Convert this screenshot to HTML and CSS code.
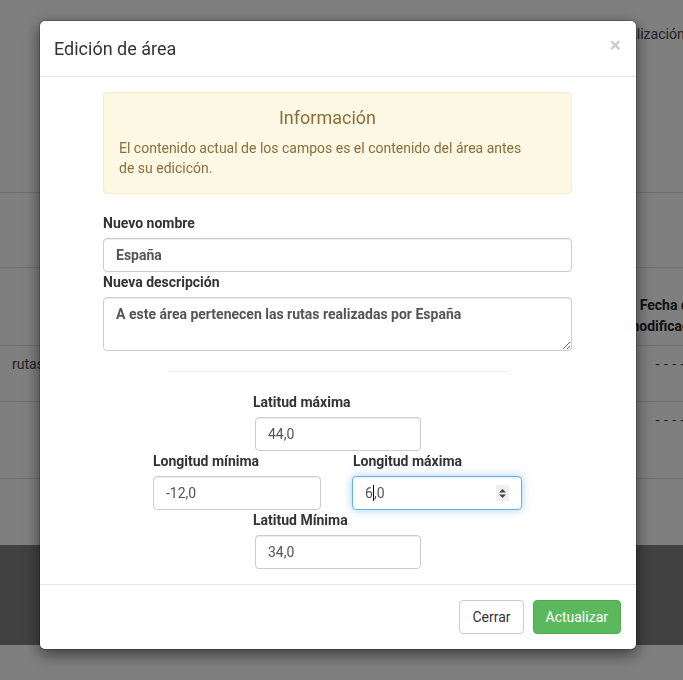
FILE: index.html
```html
<!DOCTYPE html>
<html lang="es">
<head>
<meta charset="utf-8">
<title>Edición de área</title>
<link rel="stylesheet" href="styles.css">
</head>
<body>
<div class="page">
  <div class="row r0"><span class="th-top">Fecha de actualización</span></div>
  <div class="row r1"></div>
  <div class="row r2"><span class="th-mod">Fecha de<br>modificación</span></div>
  <div class="row r3"><span class="cell-left">rutas realizadas por España</span><span class="dash">- - - -</span></div>
  <div class="row r4"><span class="dash">- - - -</span></div>
  <div class="gap"></div>
  <div class="band"></div>
</div>
<div class="backdrop"></div>
<div class="modal">
  <div class="modal-content">
    <div class="modal-header">
      <h4 class="modal-title">Edición de área</h4>
      <button class="close" type="button">×</button>
    </div>
    <div class="modal-body">
      <div class="inner">
        <div class="alert">
          <h4>Información</h4>
          <p>El contenido actual de los campos es el contenido del área antes de su edicicón.</p>
        </div>
        <label>Nuevo nombre</label>
        <input class="form-control strong" type="text" value="España">
        <label>Nueva descripción</label>
        <textarea class="form-control strong area" rows="2">A este área pertenecen las rutas realizadas por España</textarea>
        <hr class="sep">
        <div class="coords">
          <div class="grp g-top">
            <label>Latitud máxima</label>
            <input class="form-control" type="text" value="44,0">
          </div>
          <div class="grp g-left">
            <label>Longitud mínima</label>
            <input class="form-control" type="text" value="-12,0">
          </div>
          <div class="grp g-right">
            <label>Longitud máxima</label>
            <div class="form-control focused">6<span class="caret"></span>,0<span class="spin"><svg width="9" height="11" viewBox="0 0 9 11"><path d="M4.5 1 L8 4.5 H1 Z" fill="#444"/><path d="M1 6.5 H8 L4.5 10 Z" fill="#444"/></svg></span></div>
          </div>
          <div class="grp g-bottom">
            <label>Latitud Mínima</label>
            <input class="form-control" type="text" value="34,0">
          </div>
        </div>
      </div>
    </div>
    <div class="modal-footer">
      <button class="btn btn-default" type="button">Cerrar</button>
      <button class="btn btn-success" type="button">Actualizar</button>
    </div>
  </div>
</div>
</body>
</html>
```
FILE: styles.css
```css
html, body {
  margin: 0;
  padding: 0;
  height: 100%;
  overflow: hidden;
}
body {
  font-family: Roboto, "Liberation Sans", sans-serif;
  font-size: 14px;
  line-height: 20px;
  color: #333;
  background: #fff;
}
.page {
  width: 683px;
}
.row {
  border-bottom: 1px solid #ddd;
  box-sizing: border-box;
  white-space: nowrap;
  overflow: hidden;
  display: flex;
  justify-content: space-between;
  align-items: flex-start;
}
.r0 { height: 193px; padding: 24px 0 0 542px; color: #444; }
.r1 { height: 75px; }
.r2 { height: 78px; align-items: flex-end; padding: 0 0 8px 0; justify-content: flex-end; }
.th-mod {
  display: block;
  font-weight: 700;
  text-align: center;
  width: 96px;
  margin-right: -33px;
  line-height: 21px;
  color: #222;
}
.r3 { height: 56px; padding: 8px 0 0 12px; color: #444; }
.r4 { height: 77px; padding: 8px 0 0 12px; justify-content: flex-end; }
.dash { margin-right: -2px; letter-spacing: 0.5px; color: #444; }
.gap { height: 66px; }
.band { height: 100px; background: #838383; }

.backdrop {
  position: fixed;
  inset: 0;
  background: rgba(0, 0, 0, 0.5);
}
.modal {
  position: fixed;
  top: 20px;
  left: 39px;
  width: 598px;
}
.modal-content {
  background: #fff;
  border: 1px solid rgba(0, 0, 0, 0.2);
  background-clip: padding-box;
  border-radius: 6px;
  box-shadow: 0 5px 15px rgba(0, 0, 0, 0.5);
}
.modal-header {
  padding: 15px 15px 14px 14px;
  border-bottom: 1px solid #e5e5e5;
  display: flex;
  justify-content: space-between;
  align-items: flex-start;
}
.modal-title {
  margin: 0;
  font-size: 18px;
  font-weight: 400;
  line-height: 26px;
  color: #333;
}
.close {
  font-family: Roboto, "Liberation Sans", sans-serif;
  font-size: 21px;
  font-weight: 700;
  line-height: 1;
  color: #000;
  opacity: 0.2;
  background: none;
  border: 0;
  padding: 0;
  margin: -1px 0 0 0;
}
.modal-body {
  padding: 15px;
}
.inner {
  margin: 0 49px 0 48px;
}
.alert {
  padding: 15px 35px 15px 15px;
  border: 1px solid #faebcc;
  border-radius: 4px;
  background: #fcf8e3;
  color: #8a6d3b;
  margin-bottom: 19px;
}
.alert h4 {
  margin: 0 0 10px;
  font-size: 18px;
  font-weight: 400;
  line-height: 20px;
  text-align: center;
}
.alert p {
  margin: 0;
  line-height: 20px;
}
label {
  display: block;
  font-weight: 700;
  line-height: 20px;
  margin-bottom: 5px;
  color: #333;
}
.form-control {
  display: block;
  width: 100%;
  height: 34px;
  padding: 6px 12px;
  box-sizing: border-box;
  font-family: Roboto, "Liberation Sans", sans-serif;
  font-size: 14px;
  line-height: 20px;
  color: #555;
  background: #fff;
  border: 1px solid #ccc;
  border-radius: 4px;
  box-shadow: inset 0 1px 1px rgba(0, 0, 0, 0.075);
  margin: 0;
}
.strong {
  font-weight: 700;
}
.area {
  height: 54px;
  resize: vertical;
}
.sep {
  border: 0;
  border-top: 1px solid #eee;
  margin: 20px 63px 20px 64px;
}
.coords {
  margin: 0 51px 0 50px;
  display: grid;
  grid-template-columns: 100px 68px 32px 68px 100px;
}
.g-top { grid-column: 2 / 5; grid-row: 1; }
.g-left { grid-column: 1 / 3; grid-row: 2; }
.g-right { grid-column: 4 / 6; grid-row: 2; }
.g-bottom { grid-column: 2 / 5; grid-row: 3; }
.g-top .form-control, .g-bottom .form-control { margin-left: 2px; width: 166px; }
.g-right .form-control { margin-left: -1px; width: 170px; }
.focused {
  position: relative;
  border-color: #66afe9;
  box-shadow: inset 0 1px 1px rgba(0, 0, 0, 0.075), 0 0 8px rgba(102, 175, 233, 0.6);
  color: #555;
}
.caret {
  display: inline-block;
  width: 1px;
  height: 16px;
  background: #000;
  vertical-align: -3px;
}
.spin {
  position: absolute;
  right: 12px;
  top: 8px;
  width: 13px;
  height: 16px;
  background: #f0f0f0;
  display: flex;
  align-items: center;
  justify-content: center;
}
.spin svg { display: block; }
.modal-footer {
  padding: 15px;
  border-top: 1px solid #e5e5e5;
  display: flex;
  justify-content: flex-end;
  gap: 9px;
}
.btn {
  font-family: Roboto, "Liberation Sans", sans-serif;
  font-size: 14px;
  line-height: 20px;
  padding: 6px 12px;
  border-radius: 4px;
  border: 1px solid transparent;
  cursor: pointer;
}
.btn-default {
  background: #fff;
  border-color: #ccc;
  color: #333;
}
.btn-success {
  background: #5cb85c;
  border-color: #4cae4c;
  color: #fff;
}
```
